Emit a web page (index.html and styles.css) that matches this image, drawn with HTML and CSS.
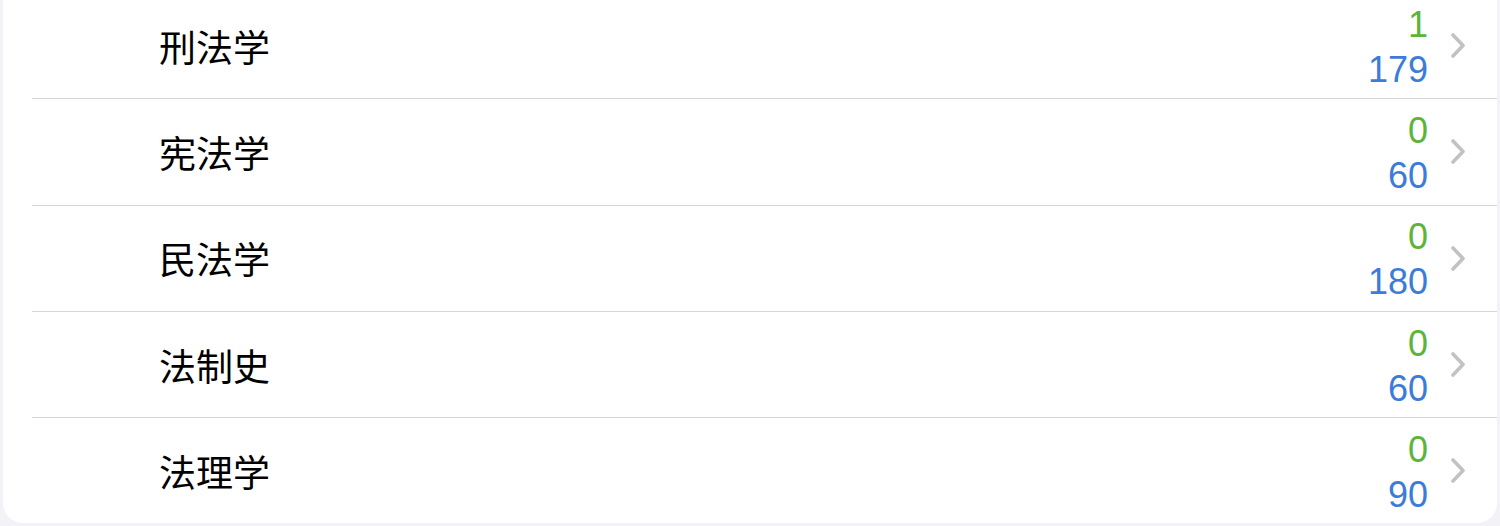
FILE: index.html
```html
<!DOCTYPE html>
<html>
<head>
    <title>法学</title>
    <link rel="stylesheet" href="styles.css">
</head>
<body>
    <ul class="list">
        <li class="row">
            <span class="name">刑法学</span>
            <span class="counts"><span class="done">1</span><span class="total">179</span></span>
            <svg class="chev" viewBox="0 0 14 25"><path d="M2 2 L12 12.5 L2 23"/></svg>
        </li>
        <li class="row">
            <span class="name">宪法学</span>
            <span class="counts"><span class="done">0</span><span class="total">60</span></span>
            <svg class="chev" viewBox="0 0 14 25"><path d="M2 2 L12 12.5 L2 23"/></svg>
        </li>
        <li class="row">
            <span class="name">民法学</span>
            <span class="counts"><span class="done">0</span><span class="total">180</span></span>
            <svg class="chev" viewBox="0 0 14 25"><path d="M2 2 L12 12.5 L2 23"/></svg>
        </li>
        <li class="row">
            <span class="name">法制史</span>
            <span class="counts"><span class="done">0</span><span class="total">60</span></span>
            <svg class="chev" viewBox="0 0 14 25"><path d="M2 2 L12 12.5 L2 23"/></svg>
        </li>
        <li class="row">
            <span class="name">法理学</span>
            <span class="counts"><span class="done">0</span><span class="total">90</span></span>
            <svg class="chev" viewBox="0 0 14 25"><path d="M2 2 L12 12.5 L2 23"/></svg>
        </li>
    </ul>
</body>
</html>
```

FILE: styles.css
```css
body { margin: 0; padding: 0 3px; background: #f2f2f7; overflow: hidden; }
.list { list-style: none; margin: -7px 0 0 0; padding: 0 0 0 29px; background: #fff; border-radius: 0 0 20px 20px; height: 530px; box-sizing: border-box; }
.row { display: flex; align-items: center; height: 105.33px; border-bottom: 1px solid #d6d6d8; }
.row:last-child { border-bottom: none; }
.name { flex: 1; padding-left: 127px; font-family: "Noto Sans CJK SC", sans-serif; font-size: 37px; color: #000; }
.counts { display: flex; flex-direction: column; align-items: flex-end; font-family: "Liberation Sans", Arial, sans-serif; font-size: 36px; line-height: 45px; margin-top: 2px; }
.done { color: #5db43a; }
.total { color: #3b7cd9; }
.chev { width: 14px; height: 25px; margin: 0 32px 0 23px; }
.chev path { fill: none; stroke: #c2c2c5; stroke-width: 3.6; stroke-linecap: round; stroke-linejoin: round; }
```
